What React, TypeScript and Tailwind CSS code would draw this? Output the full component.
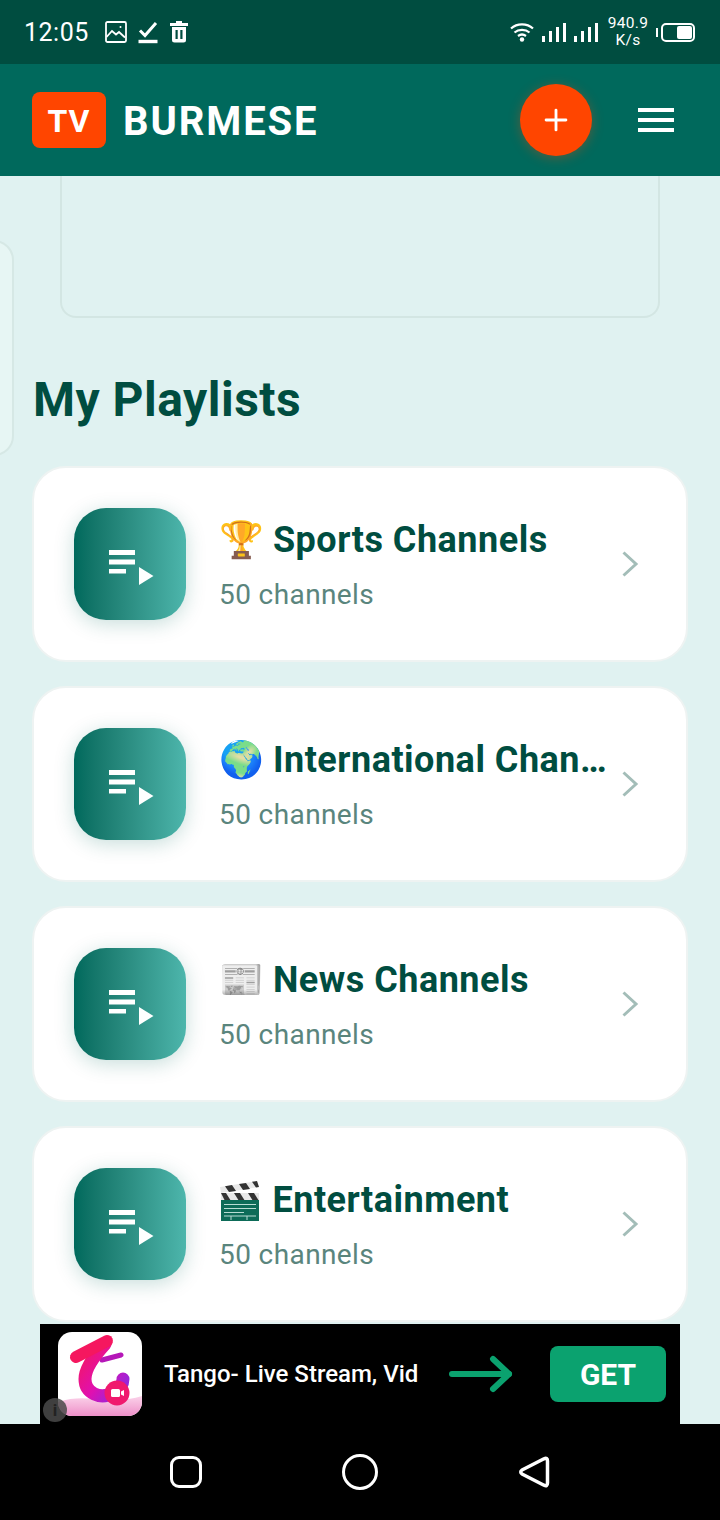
import type { ReactNode } from "react";
import { Plus } from "lucide-react";

function Clapper() {
    return (
        <svg className="inline-block align-[-9px]" width="45" height="40" viewBox="-1 0 45 40">
            <path d="M0 6 37 0l2 6L1 12z" fill="#e8e8e8" />
            <path d="M5 5.200 12 4l4 6-7 1zM19 3l7-1 4 6-7 1zM32 0.800 37 0l2 6-3 .5z" fill="#333" />
            <rect x="1" y="12" width="38" height="8" fill="#e8e8e8" />
            <path d="M1 12h5l5 8H5zM14 12h6l5 8h-6zM28 12h6l5 8h-6z" fill="#333" />
            <rect x="1" y="19" width="38" height="21" fill="#0d6b58" />
            <path d="M4 23.500h32M4 27.500h32M4 31.500h20M4 35h32M11 35v4M27 35v4" stroke="#b9dcd4" strokeWidth="1" fill="none" />
        </svg>
    );
}

const playlists: { emoji: ReactNode; name: string }[] = [
    { emoji: "🏆", name: "Sports Channels" },
    { emoji: "🌍", name: "International Chan…" },
    { emoji: "📰", name: "News Channels" },
    { emoji: <Clapper />, name: "Entertainment" },
];

function SignalBars({ className }: { className: string }) {
    return (
        <div className={`flex h-[20px] items-end gap-[4px] ${className}`}>
            <div className="h-[6px] w-[3px] bg-white" />
            <div className="h-[11px] w-[3px] bg-white" />
            <div className="h-[15px] w-[3px] bg-white" />
            <div className="h-[19px] w-[3px] bg-white" />
        </div>
    );
}

function StatusBar() {
    return (
        <div className="flex h-16 shrink-0 items-center bg-[#004d40] pl-6 pr-[25px] text-white">
            <span className="text-[25px] leading-none tracking-[0.5px]">12:05</span>
            <svg className="ml-[16px]" width="22" height="22" viewBox="0 0 22 22" fill="none" stroke="white" strokeWidth="1.8">
                <rect x="1" y="1" width="20" height="20" rx="1.5" />
                <path d="M1.500 16l5.500-6 4 3.500 3-2.500 6 5.500" />
                <circle cx="15.500" cy="6" r="1" fill="white" stroke="none" />
            </svg>
            <svg className="ml-[11px]" width="20" height="24" viewBox="0 0 20 24" fill="none" stroke="white">
                <path d="M2 10.500l5 5L18 3" strokeWidth="3" />
                <path d="M0.500 21.500h19" strokeWidth="3.400" />
            </svg>
            <svg className="ml-[11px]" width="20" height="24" viewBox="0 0 20 24" fill="white">
                <path d="M7 1h6v2h6v3H1V3h6z" />
                <path fillRule="evenodd" d="M3 7h14v13a2.500 2.500 0 0 1-2.500 2.500h-9A2.500 2.500 0 0 1 3 20zm3.500 3v9h2.200v-9zm4.800 0v9h2.200v-9z" />
            </svg>
            <div className="ml-auto flex items-center">
                <svg width="24" height="20" viewBox="0 0 24 20" fill="none" stroke="white" strokeWidth="2.200">
                    <path d="M1 6.500c6-5.500 16-5.500 22 0" />
                    <path d="M4.500 10.500c4-3.500 11-3.500 15 0" />
                    <path d="M8 14c2.400-1.800 5.600-1.800 8 0" />
                    <circle cx="12" cy="17.500" r="2.200" fill="white" stroke="none" />
                </svg>
                <SignalBars className="ml-[8px]" />
                <SignalBars className="ml-[8px]" />
                <div className="ml-[10px] flex w-[40px] flex-col items-center text-[15.5px] leading-[17px] tracking-[0.3px]">
                    <span>940.9</span>
                    <span>K/s</span>
                </div>
                <div className="ml-[8px] h-[9px] w-[2px] bg-white" />
                <div className="ml-[3px] flex h-[19px] w-[34px] items-center justify-end rounded-[5px] border-2 border-white pr-[1px]">
                    <div className="h-[13px] w-[15px] rounded-[2px] bg-white" />
                </div>
            </div>
        </div>
    );
}

function Header() {
    return (
        <header className="flex h-28 shrink-0 items-center bg-[#00695c] pl-8 pr-[46px]">
            <div className="flex h-14 w-[74px] items-center justify-center rounded-lg bg-[#ff4500] pt-[1px] text-[32px] font-bold tracking-[1px] text-white">
                TV
            </div>
            <span className="ml-[17px] pt-[3px] text-[40px] font-bold tracking-[1.9px] text-white">BURMESE</span>
            <div className="ml-auto flex h-[72px] w-[72px] items-center justify-center rounded-full bg-[#ff4500] shadow-[0_2px_12px_rgba(255,69,0,0.35)]">
                <Plus size={34} color="white" strokeWidth={2} />
            </div>
            <div className="ml-[46px] flex w-9 flex-col gap-[6px]">
                <div className="h-1 bg-white" />
                <div className="h-1 bg-white" />
                <div className="h-1 bg-white" />
            </div>
        </header>
    );
}

function PlaylistIcon() {
    return (
        <div className="h-28 w-28 shrink-0 rounded-[32px] bg-gradient-to-r from-[#00695c] to-[#4db6ac] shadow-[0_4px_20px_rgba(0,105,92,0.22)]">
            <svg width="112" height="112" viewBox="0 0 112 112" fill="white">
                <rect x="35" y="42" width="26" height="5" />
                <rect x="35" y="51.500" width="26" height="5" />
                <rect x="35" y="61" width="17" height="4.500" />
                <path d="M65 59 79.500 68 65 77z" />
            </svg>
        </div>
    );
}

function PlaylistCard({ emoji, name }: { emoji: ReactNode; name: string }) {
    return (
        <div className="flex h-[196px] items-center rounded-[34px] border-2 border-[#eef3f2] bg-white pl-[40px] pr-[47px]">
            <PlaylistIcon />
            <div className="ml-[33px] min-w-0 flex-1 pt-[2px]">
                <div className="whitespace-nowrap text-[36px] font-bold leading-[44px] tracking-[0.5px] text-[#004d40]">
                    <span className="mr-[-1px]">{emoji}</span> {name}
                </div>
                <div className="mt-4 text-[28px] leading-[34px] tracking-[0.4px] text-[#5a857d]">50 channels</div>
            </div>
            <svg className="ml-[14px] shrink-0" width="18" height="26" viewBox="0 0 18 26" fill="none" stroke="#a3bdb8" strokeWidth="3">
                <path d="M2.500 1.500 15 13 2.500 24.500" />
            </svg>
        </div>
    );
}

function AdBanner() {
    return (
        <div className="absolute bottom-0 left-10 flex h-[100px] w-[640px] items-center bg-black pl-[18px] pr-[14px]">
            <div className="h-[84px] w-[84px] shrink-0 overflow-hidden rounded-[14px] bg-white">
                <svg width="84" height="84" viewBox="0 0 84 84" fill="none">
                    <defs>
                        <linearGradient id="tangoBody" x1="0" y1="0" x2="1" y2="1">
                            <stop offset="0" stopColor="#f5175f" />
                            <stop offset="0.55" stopColor="#e010b0" />
                            <stop offset="1" stopColor="#8a2be2" />
                        </linearGradient>
                        <linearGradient id="tangoFloor" x1="0" y1="0" x2="0" y2="1">
                            <stop offset="0" stopColor="#fbd3ea" />
                            <stop offset="1" stopColor="#ee8fc8" />
                        </linearGradient>
                    </defs>
                    <path d="M0 70c18-6 34-3 48-2 14 1 26-1 36-4v20H0z" fill="url(#tangoFloor)" />
                    <path d="M44 28 63 23" stroke="#b517b8" strokeWidth="5" strokeLinecap="round" />
                    <path d="M47 12C36 24 27 36 27 47c0 14 15 21 28 14 7-4 10-9 10-14" stroke="url(#tangoBody)" strokeWidth="13" strokeLinecap="round" />
                    <path d="M18 25 49 9" stroke="#f5175f" strokeWidth="12" strokeLinecap="round" />
                    <circle cx="59" cy="61" r="12.500" fill="#f0196e" />
                    <rect x="53" y="57" width="9" height="8" rx="1.500" fill="white" />
                    <path d="M63 59.500 66 58v6l-3-1.500z" fill="white" />
                </svg>
            </div>
            <span className="ml-[22px] w-[262px] shrink-0 whitespace-nowrap text-[24px] font-medium text-white">Tango- Live Stream, Vid</span>
            <svg className="ml-[23px] shrink-0" width="64" height="38" viewBox="0 0 64 38" fill="none" stroke="#0ba26f" strokeWidth="6" strokeLinecap="round" strokeLinejoin="round">
                <path d="M3 19h57" />
                <path d="M44 4l16 15-16 15" />
            </svg>
            <div className="ml-auto flex h-14 w-[116px] items-center justify-center rounded-lg bg-[#0ba26f] text-[30px] font-bold text-white">
                GET
            </div>
            <div className="absolute bottom-[2px] left-[3px] flex h-6 w-6 items-center justify-center rounded-full bg-[#4a4a4a]/85 text-[17px] font-bold leading-none text-[#222]">
                i
            </div>
        </div>
    );
}

function NavBar() {
    return (
        <div className="flex h-24 shrink-0 items-center justify-center gap-[140px] bg-black">
            <div className="h-8 w-8 rounded-[9px] border-[3.500px] border-white" />
            <div className="h-9 w-9 rounded-full border-[3.500px] border-white" />
            <svg width="32" height="34" viewBox="0 0 32 34" fill="none" stroke="white" strokeWidth="3.500" strokeLinejoin="round">
                <path d="M26 3.800Q29.500 2.300 29.500 6V28Q29.500 31.700 26 30.200L4 19Q1.500 17 4 15Z" />
            </svg>
        </div>
    );
}

export default function App() {
    return (
        <div className="flex h-[1520px] w-[720px] flex-col overflow-hidden bg-black font-['Roboto',sans-serif]">
            <StatusBar />
            <Header />
            <main className="relative h-[1248px] shrink-0 overflow-hidden bg-[#e0f2f1]">
                {/* previous carousel slide peeking in */}
                <div className="absolute -left-8 top-[64px] h-[216px] w-[46px] rounded-[20px] border-2 border-[#d6e8e5] bg-[#e7f6f4]" />

                <div className="mx-[60px] h-[142px] rounded-b-2xl border-2 border-t-0 border-[#d3e6e3]" />

                <div className="px-[32px]">
                    <h2 className="mt-[50px] pl-[1px] text-[48px] font-bold leading-[64px] tracking-[0.5px] text-[#004d40]">My Playlists</h2>
                    <div className="mt-[34px] flex flex-col gap-[24px]">
                        {playlists.map((p) => (
                            <PlaylistCard key={p.name} emoji={p.emoji} name={p.name} />
                        ))}
                    </div>
                </div>

                <AdBanner />
            </main>
            <NavBar />
        </div>
    );
}
